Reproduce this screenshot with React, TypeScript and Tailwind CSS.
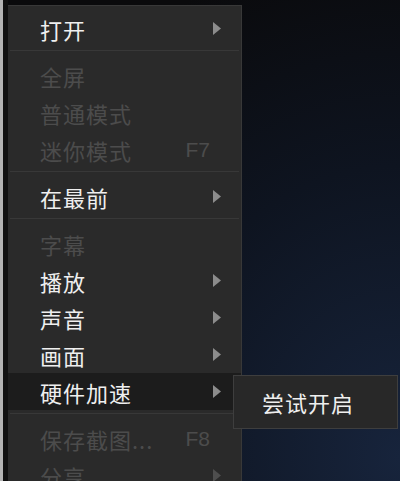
import React from "react"

type Item =
  | { kind: "sep" }
  | { kind: "item"; label: string; disabled?: boolean; arrow?: boolean; key?: string; active?: boolean }

const items: Item[] = [
  { kind: "item", label: "打开", arrow: true },
  { kind: "sep" },
  { kind: "item", label: "全屏", disabled: true },
  { kind: "item", label: "普通模式", disabled: true },
  { kind: "item", label: "迷你模式", disabled: true, key: "F7" },
  { kind: "sep" },
  { kind: "item", label: "在最前", arrow: true },
  { kind: "sep" },
  { kind: "item", label: "字幕", disabled: true },
  { kind: "item", label: "播放", arrow: true },
  { kind: "item", label: "声音", arrow: true },
  { kind: "item", label: "画面", arrow: true },
  { kind: "item", label: "硬件加速", arrow: true, active: true },
  { kind: "sep" },
  { kind: "item", label: "保存截图...", disabled: true, key: "F8" },
  { kind: "item", label: "分享", disabled: true, arrow: true },
]

function Arrow({ dim }: { dim?: boolean }) {
  return (
    <svg width="8" height="13" viewBox="0 0 8 13" className="shrink-0">
      <polygon points="0,0 8,6.5 0,13" fill={dim ? "#4e4e4e" : "#8c8c8c"} />
    </svg>
  )
}

export default function App(): React.ReactElement {
  const font = { fontFamily: '"Noto Sans CJK SC", "Liberation Sans", sans-serif' }

  return (
    <div
      className="relative flex h-[481px] w-[400px] overflow-hidden bg-[radial-gradient(ellipse_at_100%_95%,#17243c_0%,#0e1420_45%,#0a0a0c_80%)]"
      style={font}
    >
      <div className="w-[3px] shrink-0 bg-[#b4b4b4]" />
      <div className="w-[5px] shrink-0 bg-[#111111]" />

      <div className="mt-[5px] flex w-[234px] shrink-0 flex-col self-start border-t border-r border-[#383838] bg-[#2a2a2a] pt-[4px] pb-[20px]">
        {items.map((it, i) =>
          it.kind === "sep" ? (
            <div key={i} className="h-[10px] shrink-0 pt-[3px]">
              <div className="mx-[2px] h-px bg-[#383838]" />
            </div>
          ) : (
            <div
              key={i}
              className={
                "flex h-[37px] shrink-0 items-center pr-[20px] pl-[32px] text-[22px] leading-none tracking-[1px] " +
                (it.active ? "bg-[#1c1c1c] " : "") +
                (it.disabled ? "text-[#4c4c4c]" : "text-[#efefef]")
              }
            >
              <span className="flex-1 whitespace-nowrap">{it.label}</span>
              {it.key && (
                <span className="mr-[11px] text-[21px] tracking-normal" style={{ fontFamily: '"Liberation Sans", sans-serif' }}>
                  {it.key}
                </span>
              )}
              {it.arrow && <Arrow dim={it.disabled} />}
            </div>
          )
        )}
      </div>

      <div className="absolute top-[375px] left-[233px] flex h-[54px] w-[165px] items-center border border-[#3e3e3e] bg-[#282828] pl-[28px] text-[22px] leading-none tracking-[1px] text-[#efefef]">
        尝试开启
      </div>
    </div>
  )
}
